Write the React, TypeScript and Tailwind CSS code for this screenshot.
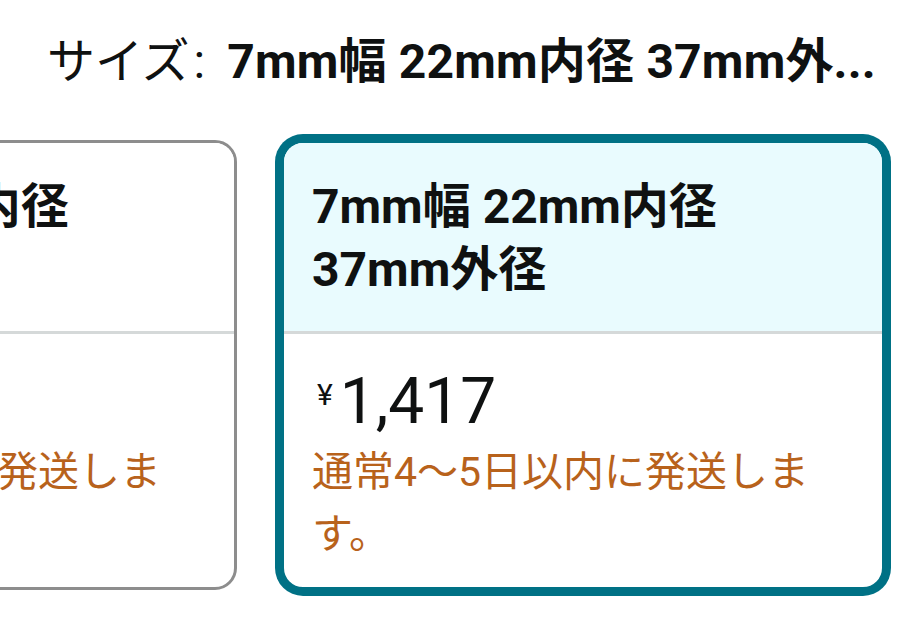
import React from "react";

const font = { fontFamily: '"Roboto", "Noto Sans CJK JP", sans-serif' };

function Card({ selected, title }: { selected?: boolean; title: string[] }) {
  return (
    <div
      className={
        selected
          ? "w-[604px] h-[450px] shrink-0 rounded-[22px] border-[3px] border-[#007185] shadow-[0_0_0_6px_#007185] overflow-hidden flex flex-col bg-white"
          : "w-[604px] h-[450px] shrink-0 rounded-[22px] border-[3px] border-[#8d8d8d] overflow-hidden flex flex-col bg-white"
      }
    >
      <div className={selected ? "h-[188px] bg-[#E9FBFE] pt-[32px] px-[28px]" : "h-[188px] bg-white pt-[32px] px-[28px]"}>
        {title.map((t, i) => (
          <div key={i} className="text-[48px] leading-[63px] font-bold text-[#0F1111] whitespace-nowrap">
            {t}
          </div>
        ))}
      </div>
      <div className="h-[3px] bg-[#D5D9D9]" />
      <div className="flex-1 px-[28px] pt-[33px]">
        <div className="flex items-start text-[#0F1111]">
          <span className="text-[30px] leading-[40px] mt-[8px] ml-[5px] mr-[7px]">¥</span>
          <span className="text-[64px] leading-[70px]">1,417</span>
        </div>
        <div className="mt-[4px] text-[41px] leading-[62px] text-[#B8621B]">
          通常4〜5日以内に発送しま
          <br />
          す。
        </div>
      </div>
    </div>
  );
}

export default function App() {
  return (
    <div className="w-[924px] h-[629px] bg-white overflow-hidden" style={font}>
      <div className="h-[124px] flex items-center pl-[47px] whitespace-nowrap text-[#0F1111]">
        <span className="text-[48px] font-normal">サイズ</span>
        <span className="text-[48px] font-normal ml-[4px] mr-[22px]">:</span>
        <span className="text-[48px] font-bold tracking-[0.2px]">7mm幅 22mm内径 37mm外...</span>
      </div>
      <div className="pt-[16px] flex gap-[44px] ml-[-367px]">
        <Card title={["5mm幅 22mm内径"]} />
        <Card selected title={["7mm幅 22mm内径", "37mm外径"]} />
      </div>
    </div>
  );
}
